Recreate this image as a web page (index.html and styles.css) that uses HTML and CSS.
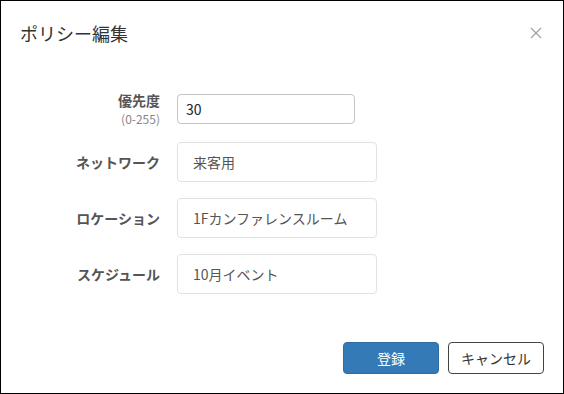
FILE: index.html
```html
<!DOCTYPE html>
<html lang="ja">
<head>
    <meta charset="UTF-8">
    <title>ポリシー編集</title>
    <link rel="stylesheet" href="styles.css">
</head>
<body>
    <div class="modal">
        <div class="modal-header">
            <h1 class="modal-title">ポリシー編集</h1>
            <button class="close-btn" aria-label="閉じる">
                <svg width="12" height="12" viewBox="0 0 12 12">
                    <path d="M1 1 L11 11 M11 1 L1 11" stroke="#a0a0a0" stroke-width="1.2" fill="none"/>
                </svg>
            </button>
        </div>

        <form class="policy-form">
            <div class="form-row row-top">
                <label class="field-label">
                    <span class="label-main">優先度</span>
                    <span class="hint">(0-255)</span>
                </label>
                <input class="field-input input-edit" type="text" value="30">
            </div>
            <div class="form-row">
                <label class="field-label">ネットワーク</label>
                <div class="field-value">来客用</div>
            </div>
            <div class="form-row">
                <label class="field-label">ロケーション</label>
                <div class="field-value">1Fカンファレンスルーム</div>
            </div>
            <div class="form-row">
                <label class="field-label">スケジュール</label>
                <div class="field-value">10月イベント</div>
            </div>
        </form>

        <div class="modal-footer">
            <button class="btn btn-primary">登録</button>
            <button class="btn btn-default">キャンセル</button>
        </div>
    </div>
</body>
</html>
```

FILE: styles.css
```css
html, body {
    margin: 0;
    padding: 0;
}

body {
    font-family: "Noto Sans CJK JP", "Noto Sans", sans-serif;
    color: #333;
    background: #fff;
}

.modal {
    box-sizing: border-box;
    width: 564px;
    height: 394px;
    border: 1px solid #000;
    display: flex;
    flex-direction: column;
}

.modal-header {
    display: flex;
    align-items: center;
    justify-content: space-between;
    padding: 19px 21px 0 19px;
    height: 26px;
}

.modal-title {
    margin: 0;
    font-size: 18px;
    font-weight: 400;
    line-height: 26px;
    color: #333;
}

.close-btn {
    border: none;
    background: none;
    padding: 0;
    width: 12px;
    height: 12px;
    display: flex;
    cursor: pointer;
}

.policy-form {
    margin-top: 48px;
    display: flex;
    flex-direction: column;
    gap: 16px;
}

.form-row {
    display: grid;
    grid-template-columns: 159px 200px;
    column-gap: 17px;
    align-items: center;
}

.row-top {
    align-items: start;
    height: 32px;
}

.field-label {
    text-align: right;
    font-size: 14px;
    font-weight: 700;
    color: #555;
    line-height: 16px;
}

.label-main {
    display: block;
    margin-top: -3px;
    line-height: 18px;
}

.hint {
    display: block;
    margin-top: 3px;
    font-size: 12px;
    font-weight: 400;
    color: #888;
    line-height: 14px;
}

.field-input {
    box-sizing: border-box;
    font-family: inherit;
    outline: none;
}

.input-edit {
    width: 178px;
    height: 30px;
    border: 1px solid #c4c4c4;
    border-radius: 4px;
    padding: 0 8px;
    font-size: 14px;
    color: #222;
}

.field-value {
    box-sizing: border-box;
    width: 200px;
    height: 40px;
    border: 1px solid #e2e2e2;
    border-radius: 4px;
    padding: 0 15px;
    display: flex;
    align-items: center;
    font-size: 14px;
    color: #555;
}

.modal-footer {
    margin-top: auto;
    display: flex;
    justify-content: flex-end;
    gap: 9px;
    padding: 0 19px 19px 0;
}

.btn {
    box-sizing: border-box;
    width: 96px;
    height: 32px;
    border-radius: 4px;
    font-family: inherit;
    font-size: 14px;
    cursor: pointer;
}

.btn-primary {
    background: #337ab7;
    border: 1px solid #2e6da4;
    color: #fff;
}

.btn-default {
    background: #fff;
    border: 1px solid #444;
    color: #333;
}
```
